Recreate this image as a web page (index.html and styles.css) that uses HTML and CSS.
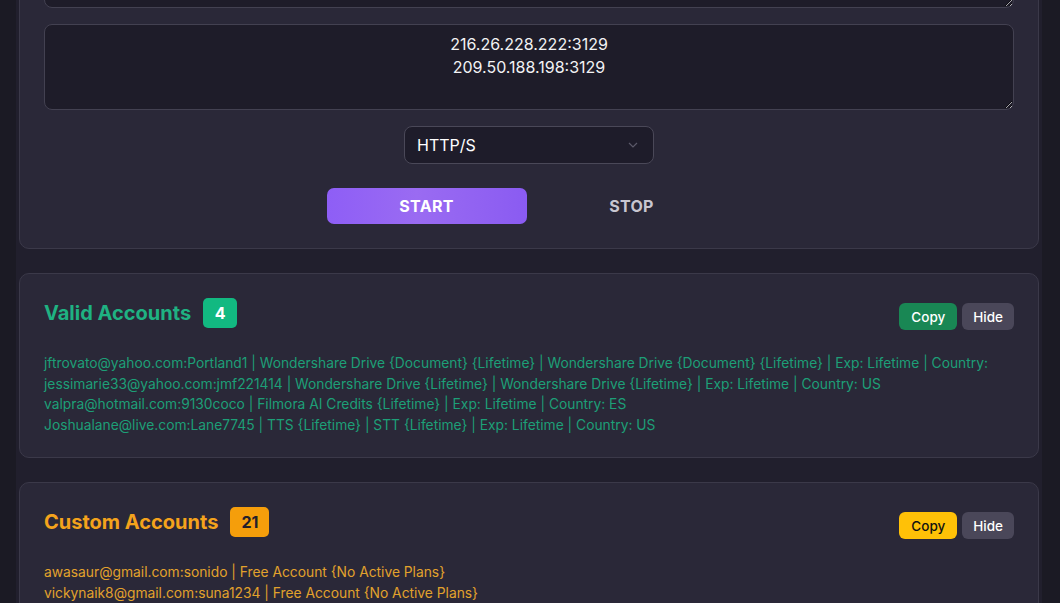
FILE: index.html
```html
<!DOCTYPE html>
<html lang="en">

<head>
  <meta charset="UTF-8" />
  <meta name="viewport" content="width=device-width, initial-scale=1.0" />
  <title>Account Checker</title>
  <link rel="stylesheet" href="styles.css">
</head>

<body>
  <div class="app">

    <!-- input panel: combos, proxies, proxy type, controls -->
    <section class="card panel">
      <textarea class="field combos" spellcheck="false"></textarea>
      <textarea class="field proxies" spellcheck="false">216.26.228.222:3129
209.50.188.198:3129</textarea>

      <div class="select-wrap">
        <select class="proxy-type">
          <option>HTTP/S</option>
          <option>SOCKS4</option>
          <option>SOCKS5</option>
        </select>
        <svg class="chevron" width="10" height="6" viewBox="0 0 10 6">
          <path d="M1 1l4 4 4-4" fill="none" stroke="currentColor" stroke-width="1.2" />
        </svg>
      </div>

      <div class="controls">
        <button class="btn-start">START</button>
        <button class="btn-stop">STOP</button>
      </div>
    </section>

    <!-- results -->
    <section class="card result valid">
      <div class="result-head">
        <div class="result-title">
          <h2>Valid Accounts</h2>
          <span class="count">4</span>
        </div>
        <div class="result-actions">
          <button class="btn-copy">Copy</button>
          <button class="btn-hide">Hide</button>
        </div>
      </div>
      <div class="result-list">
        <div>jftrovato@yahoo.com:Portland1 | Wondershare Drive {Document} {Lifetime} | Wondershare Drive {Document} {Lifetime} | Exp: Lifetime | Country:</div>
        <div>jessimarie33@yahoo.com:jmf221414 | Wondershare Drive {Lifetime} | Wondershare Drive {Lifetime} | Exp: Lifetime | Country: US</div>
        <div>valpra@hotmail.com:9130coco | Filmora AI Credits {Lifetime} | Exp: Lifetime | Country: ES</div>
        <div>Joshualane@live.com:Lane7745 | TTS {Lifetime} | STT {Lifetime} | Exp: Lifetime | Country: US</div>
      </div>
    </section>

    <section class="card result custom">
      <div class="result-head">
        <div class="result-title">
          <h2>Custom Accounts</h2>
          <span class="count">21</span>
        </div>
        <div class="result-actions">
          <button class="btn-copy">Copy</button>
          <button class="btn-hide">Hide</button>
        </div>
      </div>
      <div class="result-list">
        <div>awasaur@gmail.com:sonido | Free Account {No Active Plans}</div>
        <div>vickynaik8@gmail.com:suna1234 | Free Account {No Active Plans}</div>
      </div>
    </section>

  </div>
</body>

</html>
```

FILE: styles.css
```css
* {
  box-sizing: border-box;
}

body {
  margin: 0;
  background-color: #1b1a24;
  color: #ffffff;
  font-family: Inter, "Noto Sans", sans-serif;
}

/* page is scrolled down past the header */
.app {
  margin: -167px 18px 0 16px;
  padding: 0 3px 40px;
  background-color: #211f2d;
  display: flex;
  flex-direction: column;
  gap: 24px;
}

.card {
  background-color: #2a2838;
  border: 1px solid #3b3949;
  border-radius: 10px;
  padding: 24px;
}

.panel {
  display: flex;
  flex-direction: column;
  align-items: center;
}

.field {
  display: block;
  width: 100%;
  background-color: #1e1c29;
  border: 1px solid #434151;
  border-radius: 8px;
  color: #f2f2f4;
  font-family: Inter, "Noto Sans", sans-serif;
  font-size: 16px;
  line-height: 23px;
  text-align: center;
  padding: 8px 12px;
  outline: none;
  color-scheme: dark;
}

.combos {
  height: 150px;
  margin-bottom: 16px;
}

.proxies {
  height: 86px;
  margin-bottom: 16px;
}

.select-wrap {
  position: relative;
  width: 250px;
  margin-bottom: 24px;
}

.proxy-type {
  width: 100%;
  height: 38px;
  appearance: none;
  -webkit-appearance: none;
  background-color: #1e1c2a;
  border: 1px solid #4a4858;
  border-radius: 8px;
  color: #ffffff;
  font-family: Inter, "Noto Sans", sans-serif;
  font-size: 16px;
  padding: 0 12px;
  outline: none;
}

.chevron {
  position: absolute;
  right: 16px;
  top: 16px;
  color: #5b5969;
  pointer-events: none;
}

.controls {
  display: flex;
  gap: 5px;
}

.controls button {
  width: 200px;
  height: 36px;
  border: none;
  border-radius: 7px;
  font-family: Inter, "Noto Sans", sans-serif;
  font-size: 16px;
  font-weight: 700;
  letter-spacing: 0.3px;
  cursor: pointer;
}

.btn-start {
  background: linear-gradient(90deg, #8e5ef6, #9a6bf2 45%, #8a5bf2);
  color: #ffffff;
}

.btn-stop {
  background: transparent;
  color: #c8c6d0;
}

.result {
  padding-bottom: 22px;
}

.result-head {
  display: flex;
  justify-content: space-between;
  align-items: flex-start;
}

.result-title {
  display: flex;
  align-items: center;
  gap: 12px;
}

.result-title h2 {
  margin: 0;
  font-size: 20px;
  font-weight: 700;
  line-height: 29px;
}

.count {
  min-width: 34px;
  height: 30px;
  padding: 0 11px;
  border-radius: 5px;
  font-size: 16px;
  font-weight: 700;
  line-height: 30px;
  text-align: center;
}

.result-actions {
  display: flex;
  gap: 5px;
  margin-top: 5px;
}

.result-actions button {
  height: 27px;
  border: none;
  border-radius: 6px;
  font-family: Inter, "Noto Sans", sans-serif;
  font-size: 13.5px;
  font-weight: 500;
  cursor: pointer;
}

.btn-copy {
  padding: 0 12px;
}

.btn-hide {
  padding: 0 11px;
  background-color: #4a4759;
  color: #ffffff;
}

.result-list {
  margin-top: 23px;
  font-size: 13.8px;
  line-height: 20.5px;
}

/* valid: green */
.valid h2 {
  color: #1fb282;
}

.valid .count {
  background-color: #12b981;
  color: #ffffff;
}

.valid .btn-copy {
  background-color: #198754;
  color: #ffffff;
}

.valid .result-list {
  color: #1d9f77;
}

/* custom: amber */
.custom h2 {
  color: #f4a31c;
}

.custom .count {
  background-color: #f59e0b;
  color: #231f2b;
}

.custom .btn-copy {
  background-color: #ffc107;
  color: #111111;
}

.custom .result-list {
  color: #e2a22c;
}
```
